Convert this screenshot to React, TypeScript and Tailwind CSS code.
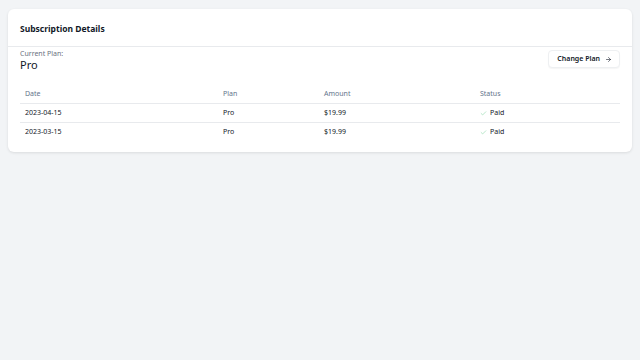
import { ArrowRight, Check } from 'lucide-react';

interface Payment {
  date: string;
  plan: string;
  amount: string;
  status: string;
}

const payments: Payment[] = [
  { date: '2023-04-15', plan: 'Pro', amount: '$19.99', status: 'Paid' },
  { date: '2023-03-15', plan: 'Pro', amount: '$19.99', status: 'Paid' },
];

const rowCls = 'grid grid-cols-[198px_101px_156px_1fr] items-center [&>*]:pl-[5px]';

export default function App() {
  return (
    <div className="min-h-[360px] w-[640px] bg-[#f2f4f6] pt-[9px] px-2 font-['Noto_Sans',sans-serif] text-[#111827]">
      <div className="rounded-md bg-white shadow-[0_1px_3px_rgba(0,0,0,0.1)]">
        {/* header */}
        <div className="h-[38px] flex items-center px-3 pt-[3px] border-b border-[#e8eaed]">
          <h2 className="text-[8.5px] font-bold leading-none">Subscription Details</h2>
        </div>

        <div className="px-3 pb-[10px]">
          <div className="flex justify-between items-start pt-[2px]">
            <div>
              <div className="text-[7px] text-[#6b7280] leading-[10px]">Current Plan:</div>
              <div className="text-[11px] leading-[12px] mb-[2px]">Pro</div>
            </div>
            <button className="mt-[1px] h-[18px] pl-2 pr-[7px] flex items-center gap-[5px] rounded border border-[#eef0f2] bg-white text-[7px] font-semibold shadow-[0_1px_1px_rgba(0,0,0,0.04)]">
              Change Plan
              <ArrowRight size={7} strokeWidth={2} />
            </button>
          </div>

          {/* payment history */}
          <div className="mt-[12px] text-[7px]">
            <div className={`${rowCls} h-[19px] text-[#64748b] border-b border-[#e8eaed]`}>
              <span>Date</span>
              <span>Plan</span>
              <span>Amount</span>
              <span>Status</span>
            </div>
            {payments.map((p, i) => (
              <div
                key={p.date}
                className={`${rowCls} h-[19px] ${i < payments.length - 1 ? 'border-b border-[#e8eaed]' : ''}`}
              >
                <span>{p.date}</span>
                <span>{p.plan}</span>
                <span>{p.amount}</span>
                <span className="flex items-center gap-[3px]">
                  <Check size={7} className="text-[#86d6a4]" strokeWidth={2} />
                  {p.status}
                </span>
              </div>
            ))}
          </div>
        </div>
      </div>
    </div>
  );
}
